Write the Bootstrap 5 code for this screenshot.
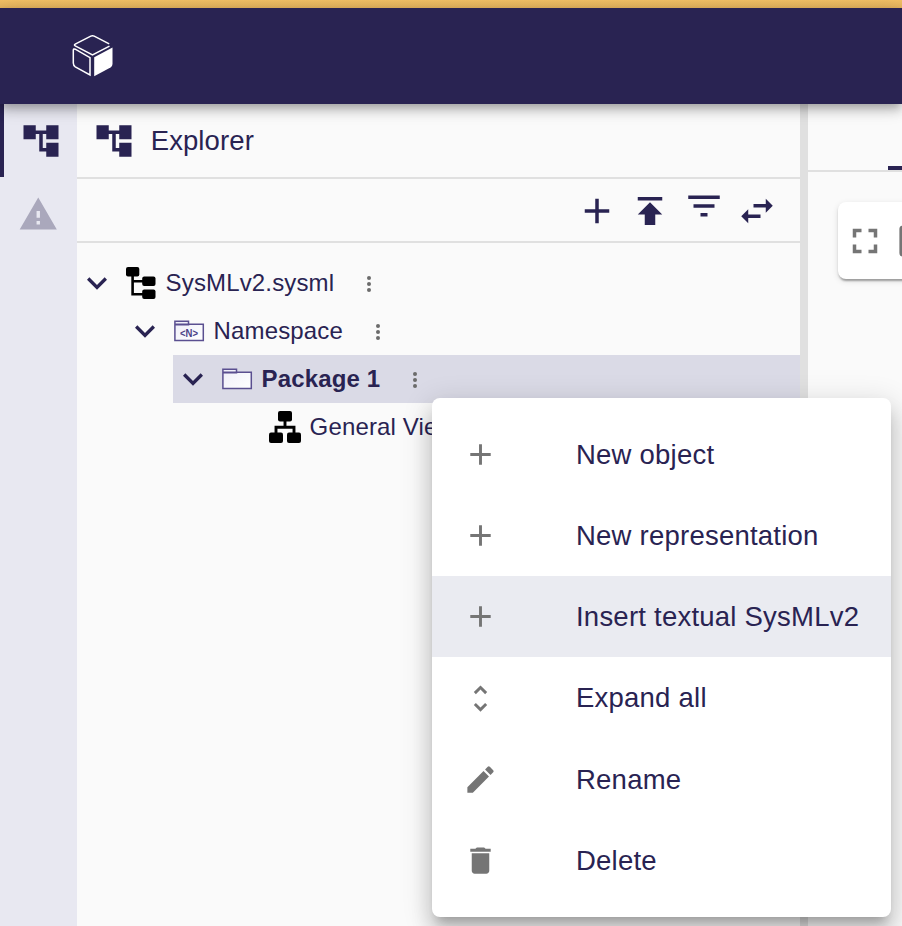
<!DOCTYPE html>
<html lang="en">
<head>
<meta charset="utf-8">
<meta name="viewport" content="width=device-width, initial-scale=1">
<title>Explorer</title>
<link href="https://cdn.jsdelivr.net/npm/bootstrap@5.3.0/dist/css/bootstrap.min.css" rel="stylesheet">
<style>
:root{--ink:#292352;--line:#e0e0e0}
html,body{height:100%}
body{font-family:"Liberation Sans",Arial,sans-serif;background:#fafafa;color:var(--ink);overflow:hidden}
svg{display:block;flex:none;fill:currentColor}
.app{height:926px}
.topstrip{height:8px;background:linear-gradient(#f2c065,#e3b25d)}
.appbar{height:96px;padding:0 72px;background:var(--ink);z-index:2;box-shadow:0 4px 8px -2px rgba(0,0,0,.2),0 8px 10px 0 rgba(0,0,0,.14),0 2px 20px 0 rgba(0,0,0,.12)}
.rail{width:77px;background:#e8e8f1}
.rail-item{height:73px;border:0;border-left:4px solid transparent;background:none;color:inherit;padding:0 0 0 16px}
.rail-item.current{border-color:var(--ink)}
.rail-item.muted{color:#aaa8bc;border:0;padding:2px 0 0 18px}
.explorer{width:723px}
.panel-title{height:75px;border-bottom:2px solid var(--line);padding-left:16px;font-size:27.5px}
.panel-title span{margin-left:15.7px;letter-spacing:.1px}
.tools{height:64px;border-bottom:2px solid var(--line);padding:1px 22px 0 0;gap:11.3px}
.tools .raised{margin:-10px 0 0}
.tree{padding-top:16px;font-size:24px;letter-spacing:.15px}
.node{height:48px;white-space:nowrap}
.node.l1{margin-left:48px}.node.l2{margin-left:96px;background:#dadae6}.node.l3{margin-left:144px}
.node .glyph{width:32px;height:32px;margin-left:8px;margin-right:8.6px}
.node.l3 .glyph{margin-left:48px}
.node .kebab{color:#6b6b6b;margin:2px 0 0 22.7px}
.splitter{width:8px;background:var(--line)}
.tabs{height:68px;border-bottom:2px solid var(--line)}
.tab-mark{width:14px;height:4px;background:var(--ink)}
.floatbar{height:77px;width:90px;margin:30px 0 0 30px;padding-left:5.5px;gap:9px;color:#757575;background:#fff;border-radius:8px 0 0 8px;box-shadow:0 4px 2px -2px rgba(0,0,0,.2),0 2px 2px 0 rgba(0,0,0,.14),0 2px 6px 0 rgba(0,0,0,.12)}
.ctx{position:absolute;left:432px;top:398px;width:459px;height:519px;padding:16px 0;border-radius:8px;background:#fff;z-index:5;box-shadow:0 10px 10px -6px rgba(0,0,0,.2),0 16px 20px 2px rgba(0,0,0,.14),0 6px 28px 4px rgba(0,0,0,.12)}
.ctx button{height:81.2px;border:0;background:none;padding:0 0 0 31px;color:var(--ink);font-size:27.5px;letter-spacing:.23px;text-align:left}
.ctx button svg{color:#757575;margin-right:78px}
.ctx button.hovered{background:linear-gradient(#eaebf1,#eaebf1) 0 0/100% 81px no-repeat}
</style>
<script src="https://cdn.jsdelivr.net/npm/bootstrap@5.3.0/dist/js/bootstrap.bundle.min.js"></script>
</head>
<body>
<svg width="0" height="0" class="position-absolute" aria-hidden="true">
<symbol id="tree" viewBox="0 0 24 24"><path d="M22 11V3h-7v3H9V3H2v8h7V8h2v10h4v3h7v-8h-7v3h-2V8h2v3z"/></symbol>
<symbol id="plus" viewBox="0 0 24 24"><path d="M19 13h-6v6h-2v-6H5v-2h6V5h2v6h6v2z"/></symbol>
<symbol id="chev" viewBox="0 0 24 24"><path d="M16.59 8.59 12 13.17 7.41 8.59 6 10l6 6 6-6z"/></symbol>
<symbol id="dots" viewBox="0 0 24 24"><circle cx="12" cy="6" r="2"/><circle cx="12" cy="12" r="2"/><circle cx="12" cy="18" r="2"/></symbol>
<linearGradient id="paper" x1="0" y1="0" x2="1" y2="1"><stop offset="0" stop-color="#eeeef8"/><stop offset="1" stop-color="#fff"/></linearGradient>
<symbol id="folder" viewBox="0 0 32 32"><g fill="url(#paper)" stroke="#5a4f90" stroke-width="1.5"><path d="M1.9 6.200h13.600v3.500H1.900zM1.900 9.300h28.400v16.200H1.900z"/></g></symbol>
</svg>
<div class="app d-flex flex-column position-relative">
  <div class="topstrip flex-shrink-0"></div>
  <header class="appbar d-flex align-items-center flex-shrink-0">
    <svg width="42" height="42" viewBox="0 0 42 42" stroke="#fff" stroke-width="1.5" style="fill:none"><path d="M37.200 8.800 22.200 1.200q-1.700-.9-3.400 0L3.200 9.200q-1.500.9 0 1.700L20.500 19.800 37.500 11.200"/><path d="M18 40V22.600L3.200 14.200q-1.900-.9-1.900 1V28q0 2.500 2 3.800z"/><path fill="#fff" stroke="none" d="M40.500 12.600V29q0 2.300-2 3.400L22.200 41.200V22.300z"/></svg>
  </header>
  <main class="d-flex flex-grow-1">
    <nav class="rail d-flex flex-column flex-shrink-0">
      <button class="rail-item current d-flex align-items-center" aria-label="Explorer"><svg width="42" height="42"><use href="#tree"/></svg></button>
      <button class="rail-item muted d-flex align-items-center" aria-label="Validation"><svg width="40.500" height="40.500" viewBox="0 0 24 24"><path d="M1 21h22L12 2 1 21zm12-3h-2v-2h2v2zm0-4h-2v-4h2v4z"/></svg></button>
    </nav>
    <section class="explorer d-flex flex-column flex-shrink-0">
      <div class="panel-title d-flex align-items-center"><svg width="42" height="42"><use href="#tree"/></svg><span>Explorer</span></div>
      <div class="tools d-flex align-items-center justify-content-end">
        <svg width="42" height="42"><use href="#plus"/></svg>
        <svg width="42" height="42" viewBox="0 0 24 24"><path d="M5 4v2h14V4H5zm0 10h4v6h6v-6h4l-7-7-7 7z"/></svg>
        <svg class="raised" width="42" height="42" viewBox="0 0 24 24"><path d="M10 18h4v-2h-4v2zM3 6v2h18V6H3zm3 7h12v-2H6v2z"/></svg>
        <svg width="42" height="42" viewBox="0 0 24 24"><path d="M6.990 11 3 15l3.990 4v-3H14v-2H6.990v-3zM21 9l-3.990-4v3H10v2h7.010v3L21 9z"/></svg>
      </div>
      <div class="tree">
        <div class="node d-flex align-items-center"><svg width="40" height="40"><use href="#chev"/></svg>
          <svg class="glyph" viewBox="0 0 32 32"><g fill="#000"><rect x="1" width="13.300" height="9.500" rx="2"/><rect x="17.200" y="9.500" width="13.300" height="9.500" rx="2"/><rect x="17.200" y="22.500" width="13.300" height="9.500" rx="2"/></g><path d="M7.600 9v18.300H18M7.600 14.200H18" fill="none" stroke="#000" stroke-width="2.600"/></svg>
          <span>SysMLv2.sysml</span><svg class="kebab" width="24" height="24"><use href="#dots"/></svg></div>
        <div class="node l1 d-flex align-items-center"><svg width="40" height="40"><use href="#chev"/></svg>
          <svg class="glyph" viewBox="0 0 32 32"><use href="#folder" width="32" height="32"/><text x="16" y="21.800" text-anchor="middle" font-size="11" font-weight="700" letter-spacing="0" fill="#4a3f86" textLength="18" lengthAdjust="spacingAndGlyphs">&lt;N&gt;</text></svg>
          <span>Namespace</span><svg class="kebab" width="24" height="24"><use href="#dots"/></svg></div>
        <div class="node l2 d-flex align-items-center"><svg width="40" height="40"><use href="#chev"/></svg>
          <svg class="glyph"><use href="#folder"/></svg>
          <span class="fw-bold">Package 1</span><svg class="kebab" width="24" height="24"><use href="#dots"/></svg></div>
        <div class="node l3 d-flex align-items-center">
          <svg class="glyph" viewBox="0 0 32 32"><g fill="#000"><rect x="9" width="14" height="10.500" rx="2"/><rect y="21.500" width="14" height="10.500" rx="2"/><rect x="18" y="21.500" width="14" height="10.500" rx="2"/></g><path d="M16 10v6M7 22v-5.800h18V22" fill="none" stroke="#000" stroke-width="2.900"/></svg>
          <span>General View</span></div>
      </div>
    </section>
    <div class="splitter flex-shrink-0"></div>
    <section class="flex-grow-1 overflow-hidden">
      <div class="tabs d-flex align-items-end justify-content-end"><div class="tab-mark"></div></div>
      <div class="floatbar d-flex align-items-center">
        <svg width="42" height="42" viewBox="0 0 24 24"><path d="M7 14H5v5h5v-2H7v-3zm-2-4h2V7h3V5H5v5zm12 7h-3v2h5v-5h-2v3zM14 5v2h3v3h2V5h-5z"/></svg>
        <svg width="42" height="42" viewBox="0 0 24 24"><rect x="2.500" y="3.200" width="20" height="17.700" rx="2"/></svg>
      </div>
    </section>
  </main>
  <div class="ctx d-flex flex-column" role="menu">
    <button class="d-flex align-items-center"><svg width="35" height="35"><use href="#plus"/></svg>New object</button>
    <button class="d-flex align-items-center"><svg width="35" height="35"><use href="#plus"/></svg>New representation</button>
    <button class="hovered d-flex align-items-center"><svg width="35" height="35"><use href="#plus"/></svg>Insert textual SysMLv2</button>
    <button class="d-flex align-items-center"><svg width="35" height="35" viewBox="0 0 24 24"><path d="M12 5.830 15.170 9l1.410-1.410L12 3 7.410 7.590 8.830 9 12 5.830zm0 12.340L8.830 15l-1.410 1.410L12 21l4.590-4.590L15.170 15 12 18.170z"/></svg>Expand all</button>
    <button class="d-flex align-items-center"><svg width="35" height="35" viewBox="0 0 24 24"><path d="M3 17.250V21h3.750L17.810 9.940l-3.750-3.750L3 17.250zM20.710 7.040a1 1 0 0 0 0-1.410l-2.340-2.340a1 1 0 0 0-1.410 0l-1.830 1.830 3.750 3.750 1.830-1.830z"/></svg>Rename</button>
    <button class="d-flex align-items-center"><svg width="35" height="35" viewBox="0 0 24 24"><path d="M6 19c0 1.100.900 2 2 2h8c1.100 0 2-.900 2-2V7H6v12zM19 4h-3.500l-1-1h-5l-1 1H5v2h14V4z"/></svg>Delete</button>
  </div>
</div>
</body>
</html>
